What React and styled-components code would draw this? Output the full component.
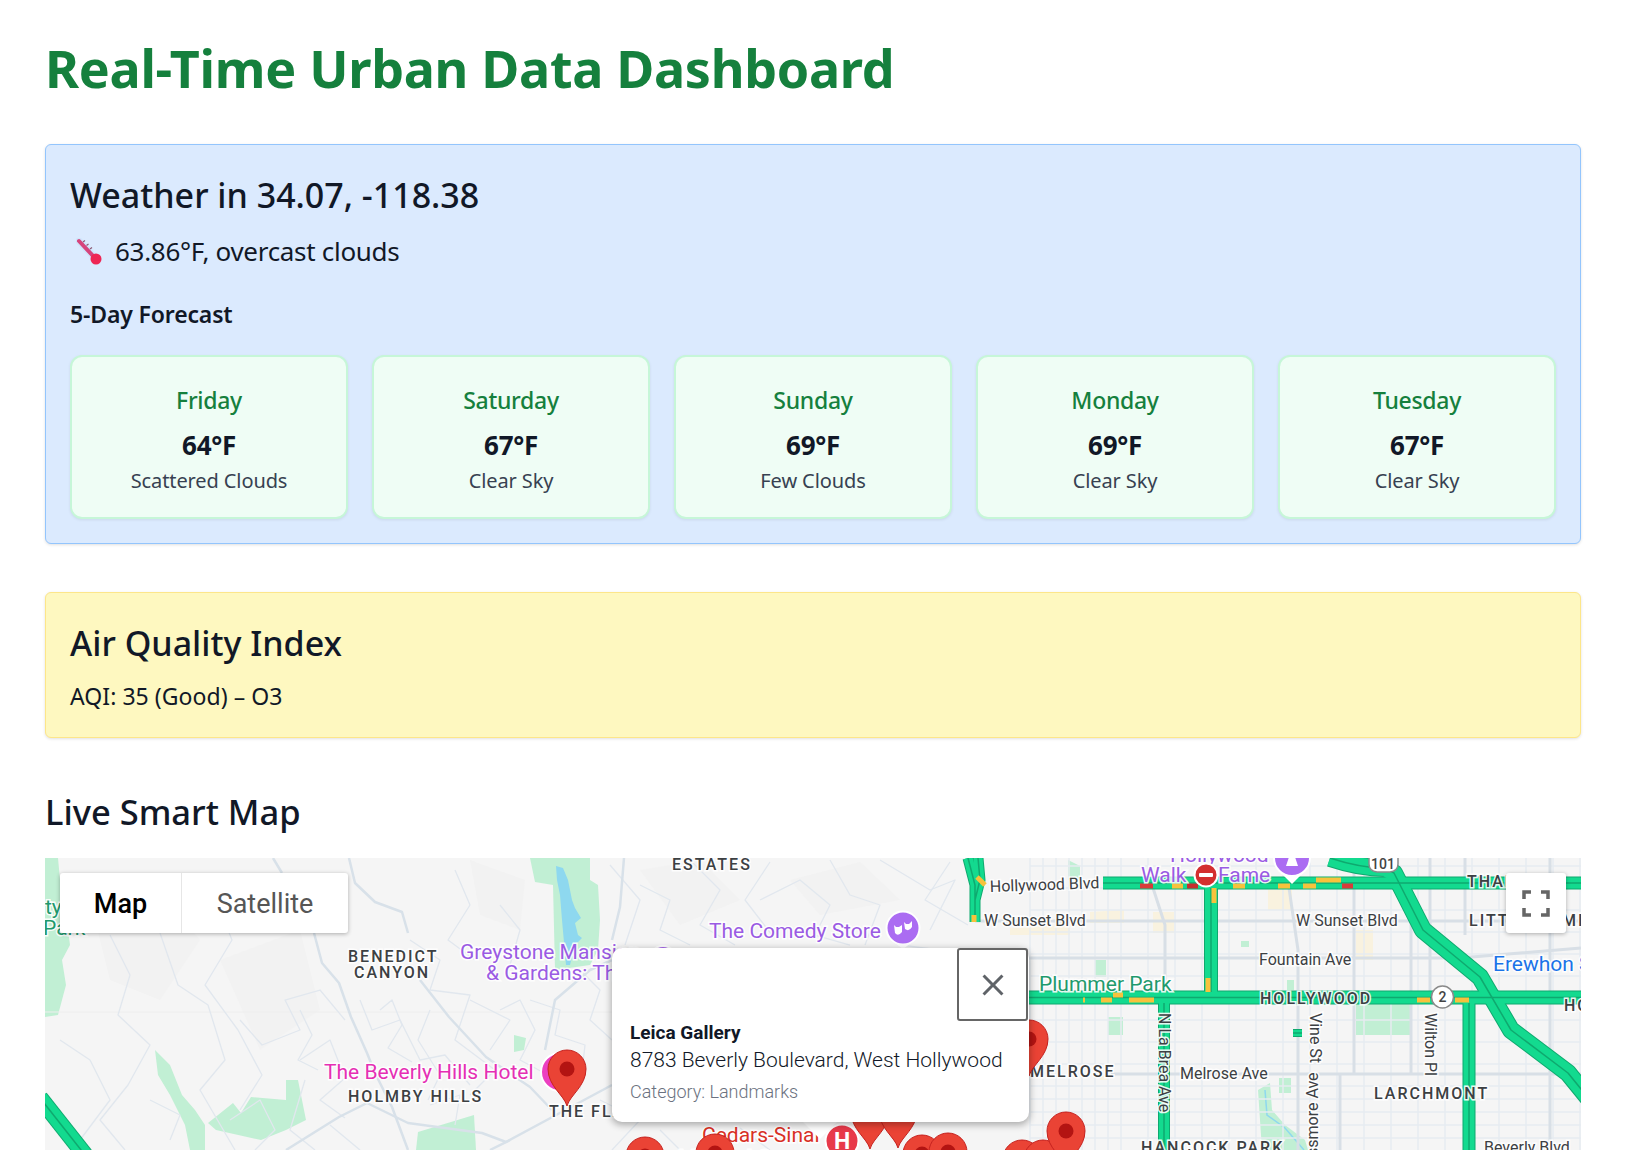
import styled, { createGlobalStyle } from 'styled-components';

const forecast = [
    { day: 'Friday', temp: '64°F', text: 'Scattered Clouds' },
    { day: 'Saturday', temp: '67°F', text: 'Clear Sky' },
    { day: 'Sunday', temp: '69°F', text: 'Few Clouds' },
    { day: 'Monday', temp: '69°F', text: 'Clear Sky' },
    { day: 'Tuesday', temp: '67°F', text: 'Clear Sky' },
];

// all map coordinates are page pixels, the svg viewBox starts at the map's corner
const parks = [
    '45,858 58,858 60,880 66,915 70,945 62,960 66,985 58,1015 45,1017',
    '530,858 590,858 590,880 598,885 600,920 598,950 590,965 555,970 553,885 535,882',
    '155,1050 170,1065 182,1095 195,1110 205,1125 205,1150 190,1150 185,1125 170,1095 158,1075',
    '251,1097 286,1100 286,1080 298,1080 306,1120 286,1130 261,1140 216,1130 208,1123 233,1103 241,1113',
    '416,1150 418,1132 474,1115 476,1150',
    '514,1035 526,1038 524,1050 514,1052',
    '1068,860 1080,866 1080,880 1068,880',
    '1095,960 1106,960 1106,977 1095,977',
    '1108,1017 1123,1017 1123,1035 1108,1035',
    '1356,1003 1411,1003 1411,1035 1356,1035',
    '1241,941 1249,941 1249,947 1241,947',
    '1287,980 1294,980 1294,990 1287,990',
    '1279,1078 1291,1078 1291,1093 1279,1093',
    '1258,1090 1270,1083 1272,1110 1285,1125 1305,1140 1308,1150 1262,1150',
];

const beige = [
    '1090,912 1124,910 1124,923 1090,923',
    '1153,912 1174,912 1174,933 1153,933',
    '1268,890 1292,890 1292,910 1268,910',
    '1356,930 1373,930 1373,960 1356,960',
    '1010,928 1070,925 1070,935 1010,935',
    '1100,1076 1108,1076 1108,1080 1100,1080',
];

const shades = [
    '90,900 150,880 200,940 160,1000 110,980',
    '220,960 300,930 320,1010 260,1050',
    '470,860 525,880 520,930 480,915',
    '640,870 700,860 740,900 680,925',
    '790,880 860,862 900,900 820,915',
];

const hillRoads = [
    'M273 858L282 873M349 858L355 883L375 902L402 912L408 933M314 933L322 963L339 983L351 1017L367 1053L375 1073L392 1107L408 1150',
    'M420 980L449 1017L486 1057L530 1087L552 1110M286 1150L339 1117L367 1103L408 1123L482 1133L506 1142L571 1107L612 1085',
    'M624 858L620 907L612 940M490 1150L510 1140M545 1050L555 1000L590 970L612 960',
];

const thinRoads = [
    'M110 935L130 975L118 1015L150 1045L128 1085L100 1120L125 1150',
    'M160 933L178 985L208 1005L225 1060L200 1090L235 1150',
    'M218 905L232 940L205 985L238 1030L262 1075L240 1110',
    'M240 1020L262 1045L300 1030L285 1000L320 990L345 1020',
    'M300 1060L330 1040L345 1078L320 1100L345 1118',
    'M410 940L440 960L430 990L470 995L455 1040L495 1070L470 1095',
    'M360 1000L372 1030L400 1020L420 1060L445 1055L470 1085',
    'M305 1080L290 1130L315 1150',
    'M150 1100L180 1115L170 1140M80 1140L110 1100L90 1060L60 1040',
    'M640 885L670 900L660 930L690 945M690 860L720 890L700 925L735 945',
    'M760 900L800 880L830 905L815 935L850 945M880 860L930 890L955 880L930 930',
    'M530 1000L560 1010L555 1035L585 1045L580 1090M470 1000L510 1020L490 1050',
    'M580 970L600 990L590 1020L612 1040M940 950L900 945',
    'M600 1100L640 1120L612 1150M660 1130L680 1150M740 1128L770 1150',
    'M300 1010L312 1035L298 1060L318 1070M380 1010L392 1000L402 1025L388 1048L412 1062',
    'M430 1010L418 1040L440 1075L428 1100M500 1010L520 1000L535 1030L520 1060L548 1075',
    'M455 870L470 905L448 940L475 960M500 905L520 930L510 965M610 865L640 900L625 945',
    'M770 862L745 900L772 935M830 860L850 895L880 905L865 945M950 862L925 900L968 925',
    'M230 1120L260 1100L275 1130L255 1150M430 1105L460 1095L455 1125M330 1125L360 1150',
];

const gridX = [];
for (let x = 1030; x < 1581; x += x < 1110 ? 13 : 27) gridX.push(x);
const gridY = [];
for (let y = 866; y < 1150; y += y > 1080 ? 13 : 22) gridY.push(y);

const mainStreets = [
    'M975 921H1581', 'M1029 958H1460L1581 948', 'M1111 1074H1581',
    'M1153 888L1165 925V992', 'M1289 888L1298 950V1150', 'M1354 858V1074', 'M1411 921V1074',
    'M1430 858V1003', 'M1465 858V935', 'M1340 1074V1150', 'M1550 858V1150',
];

const traffic = [
    { d: 'M968 858L975 885V922M978 858L980 880L975 900', w: 9 },
    { d: 'M1103 883H1581', w: 11 },
    { d: 'M1211 888V992', w: 12 },
    { d: 'M1029 997.5H1581', w: 12 },
    { d: 'M1164 1003V1150', w: 10 },
    { d: 'M1469 1003V1150', w: 11 },
    { d: 'M1330 858Q1360 868 1385 868L1394 873L1423 930L1480 977L1511 1030L1568 1073L1590 1100', w: 16 },
    { d: 'M40 1098L85 1155', w: 15 },
    { d: 'M1293 1033H1302', w: 6 },
];

const trafficMarks = [
    { d: 'M1140 886H1153', c: '#d93a3a' },
    { d: 'M1172 886H1183', c: '#f7c23c' },
    { d: 'M1187 886H1198', c: '#c62f2f' },
    { d: 'M1233 886H1245', c: '#f7c23c' },
    { d: 'M1278 886H1290', c: '#f7c23c' },
    { d: 'M1303 886H1316', c: '#f7c23c' },
    { d: 'M1316 880H1341', c: '#f7c23c' },
    { d: 'M1342 886H1353', c: '#d93a3a' },
    { d: 'M1214 888V903', c: '#f7c23c' },
    { d: 'M1208 978V992', c: '#f7c23c' },
    { d: 'M1083 1000H1085', c: '#f7c23c' },
    { d: 'M1101 1000H1112', c: '#f7c23c' },
    { d: 'M1113 995H1123', c: '#f7c23c' },
    { d: 'M1129 1000H1154', c: '#f7c23c' },
    { d: 'M1417 1000H1430', c: '#f7c23c' },
    { d: 'M1455 1000H1469', c: '#f7c23c' },
    { d: 'M977 877L985 885', c: '#f7c23c' },
    { d: 'M974 915V922', c: '#f7c23c' },
];

const labels = [
    { t: 'ESTATES', x: 672, y: 870, kind: 'area' },
    { t: 'BENEDICT', x: 348, y: 962, kind: 'area' },
    { t: 'CANYON', x: 354, y: 978, kind: 'area' },
    { t: 'HOLMBY HILLS', x: 348, y: 1102, kind: 'area' },
    { t: 'THE FLATS', x: 549, y: 1117, kind: 'area' },
    { t: 'MELROSE', x: 1030, y: 1077, kind: 'area' },
    { t: 'HOLLYWOOD', x: 1260, y: 1004, kind: 'area' },
    { t: 'HO', x: 1564, y: 1011, kind: 'area' },
    { t: 'LARCHMONT', x: 1374, y: 1099, kind: 'area' },
    { t: 'HANCOCK PARK', x: 1141, y: 1153, kind: 'area' },
    { t: 'THAI', x: 1467, y: 887, kind: 'area' },
    { t: 'LITTLE', x: 1469, y: 926, kind: 'area' },
    { t: 'MI', x: 1562, y: 926, kind: 'area' },
    { t: 'W Sunset Blvd', x: 984, y: 926, kind: 'street' },
    { t: 'W Sunset Blvd', x: 1296, y: 926, kind: 'street' },
    { t: 'Fountain Ave', x: 1259, y: 965, kind: 'street' },
    { t: 'Melrose Ave', x: 1180, y: 1079, kind: 'street' },
    { t: 'Beverly Blvd', x: 1484, y: 1153, kind: 'street' },
    { t: 'Hollywood Blvd', x: 990, y: 892, kind: 'street', rotate: -2 },
    { t: 'N La Brea Ave', x: 1159, y: 1013, kind: 'street', rotate: 90 },
    { t: 'Vine St', x: 1310, y: 1013, kind: 'street', rotate: 90 },
    { t: 'Wilton Pl', x: 1425, y: 1013, kind: 'street', rotate: 90 },
    { t: 'Rossmore Ave', x: 1318, y: 1175, kind: 'street', rotate: -90 },
    { t: 'ty', x: 45, y: 914, kind: 'park' },
    { t: 'Park', x: 43, y: 935, kind: 'park' },
    { t: 'Plummer Park', x: 1039, y: 991, kind: 'park' },
    { t: 'Greystone Mansion', x: 460, y: 959, kind: 'purple' },
    { t: '& Gardens: The', x: 486, y: 980, kind: 'purple' },
    { t: 'The Comedy Store', x: 709, y: 938, kind: 'purple' },
    { t: 'Hollywood', x: 1170, y: 862, kind: 'purple' },
    { t: 'Walk', x: 1141, y: 882, kind: 'purple' },
    { t: 'Fame', x: 1218, y: 882, kind: 'purple' },
    { t: 'The Beverly Hills Hotel', x: 324, y: 1079, kind: 'pink' },
    { t: 'Cedars-Sinai', x: 702, y: 1142, kind: 'red' },
    { t: 'Medical Center', x: 678, y: 1165, kind: 'red' },
    { t: 'Erewhon Santa', x: 1493, y: 971, kind: 'blue' },
];

// [x of the head's centre, y of the head's top]
const pins = [
    [567, 1050], [1029, 1020], [870, 1093], [898, 1092], [645, 1137], [715, 1134],
    [922, 1135], [948, 1133], [1022, 1140], [1043, 1140], [1066, 1112],
];

const Pin = ({ x, top }) => (
    <g transform={`translate(${x} ${top + 19})`}>
        <path
            d="M0,37 C-3,26 -19,17 -19,0 A19,19 0 1 1 19,0 C19,17 3,26 0,37Z"
            fill="#ea4335"
            stroke="#c5221f"
        />
        <circle r="7.5" fill="#b31412" />
    </g>
);

const MapLayer = () => (
    <MapCanvas viewBox="45 858 1536 292">
        <rect x="45" y="858" width="1536" height="292" fill="#f5f5f5" />
        {shades.map(p => <polygon key={p} points={p} fill="#f2f2f2" />)}
        {beige.map(p => <polygon key={p} points={p} fill="#f9f2df" />)}
        {parks.map(p => <polygon key={p} points={p} fill="#c1efd4" />)}
        <polygon
            points="556,866 563,868 568,880 572,900 575,908 581,918 575,923 578,935 582,938 575,945 570,965 566,965 562,920 560,895 557,880"
            fill="#8ed8ef"
        />
        <path d="M1265 1090L1267 1115L1285 1128L1304 1150" fill="none" stroke="#8ed8ef" strokeWidth="1.5" />
        <Street d="M45 1012H612" $width={1} $color="#eeeeee" />

        {gridX.map(x => <Street key={x} d={`M${x} 858V1150`} $width={1.5} $color="#e6ebf0" />)}
        {gridY.map(y => <Street key={y} d={`M1030 ${y}H1581`} $width={1.5} $color="#e6ebf0" />)}
        {thinRoads.map(d => <Street key={d} d={d} $width={1.3} $color="#e1e7ee" />)}
        {hillRoads.map(d => <Street key={d} d={d} $width={2.5} $color="#d8e1e9" />)}
        {mainStreets.map(d => <Street key={d} d={d} $width={3} $color="#d8dfe6" />)}

        {traffic.map(r => <Street key={r.d} d={r.d} $width={r.w + 2} $color="#0fa96f" />)}
        {traffic.map(r => <Street key={r.d} d={r.d} $width={r.w} $color="#13da8f" />)}
        {traffic.map(r => <Street key={r.d} d={r.d} $width={1.5} $color="#0fa96f" />)}
        {trafficMarks.map(m => <Street key={m.d} d={m.d} $width={5} $color={m.c} />)}

        {labels.map(l => (
            <MapLabel
                key={l.t + l.x}
                x={l.x}
                y={l.y}
                $kind={l.kind}
                transform={l.rotate ? `rotate(${l.rotate} ${l.x} ${l.y})` : undefined}
            >
                {l.t}
            </MapLabel>
        ))}

        <circle cx="560" cy="1072" r="19" fill="#ec3fc0" stroke="#fff" strokeWidth="2" />
        <circle cx="663" cy="960" r="14" fill="#a868ee" stroke="#fff" strokeWidth="2" />

        <path d="M891 940L903 949L915 940Z" fill="#fff" />
        <circle cx="903" cy="928" r="16.5" fill="#ab6cf2" stroke="#fff" strokeWidth="2" />
        <path d="M894 925L896 927H899L902 925V932Q898 937 895 933ZM904 922L906 924H909L912 921V927Q909 932 905 929Z" fill="#fff" />

        <path d="M1280 872L1292 884L1304 872Z" fill="#fff" />
        <circle cx="1292" cy="858" r="18" fill="#ab6cf2" stroke="#fff" strokeWidth="2" />
        <path d="M1289 857H1295L1298 866H1286Z" fill="#fff" />

        <circle cx="1206" cy="875" r="11.5" fill="#d32f2f" stroke="#fff" strokeWidth="2" />
        <rect x="1199" y="873" width="14" height="4" rx="1" fill="#fff" />

        <circle cx="1442.5" cy="997" r="11" fill="#fff" stroke="#8a8a8a" strokeWidth="1.5" />
        <ShieldText x="1442.5" y="1002">2</ShieldText>
        <path d="M1369 855H1398V864Q1398 871 1390 872H1377Q1369 871 1369 864Z" fill="#fff" stroke="#8a8a8a" strokeWidth="1.5" />
        <ShieldText x="1383" y="869">101</ShieldText>

        {pins.map(([x, top]) => <Pin key={x} x={x} top={top} />)}

        <path d="M803 1122L820 1139L837 1122Z" fill="#fff" />
        <circle cx="842" cy="1141" r="16.5" fill="#e8394a" stroke="#fff" strokeWidth="2" />
        <HospitalText x="842" y="1149">H</HospitalText>
    </MapCanvas>
);

const Thermometer = () => (
    <ThermoIcon viewBox="0 0 27 27">
        <path d="M3 3L19 20" stroke="#cfe4fb" strokeWidth="7" strokeLinecap="round" />
        <path d="M3 3L19 20" stroke="#d6447c" strokeWidth="4" strokeLinecap="round" />
        <circle cx="20" cy="21" r="5.5" fill="#ee2654" />
        <path d="M7 4L9 2.5M10.5 7.5L12.5 6M14 11L16 9.5" stroke="#8d5a74" strokeWidth="1.2" />
    </ThermoIcon>
);

const App = () => {
    return (
        <Page>
            <GlobalStyle />
            <Title>Real-Time Urban Data Dashboard</Title>

            <WeatherPanel>
                <PanelHeading>Weather in 34.07, -118.38</PanelHeading>
                <TempRow>
                    <Thermometer />
                    63.86°F, overcast clouds
                </TempRow>
                <ForecastTitle>5-Day Forecast</ForecastTitle>
                <ForecastGrid>
                    {forecast.map(f => (
                        <DayCard key={f.day}>
                            <DayName>{f.day}</DayName>
                            <DayTemp>{f.temp}</DayTemp>
                            <DayText>{f.text}</DayText>
                        </DayCard>
                    ))}
                </ForecastGrid>
            </WeatherPanel>

            <AirPanel>
                <PanelHeading>Air Quality Index</PanelHeading>
                <AirText>AQI: 35 (Good) – O3</AirText>
            </AirPanel>

            <MapHeading>Live Smart Map</MapHeading>
            <MapFrame>
                <MapLayer />
                <MapTypes>
                    <MapType $active>Map</MapType>
                    <MapType>Satellite</MapType>
                </MapTypes>
                <FullscreenButton aria-label="Fullscreen">
                    <svg width="28" height="27" viewBox="0 0 28 27" fill="none" stroke="#666" strokeWidth="3.5">
                        <path d="M2 9V2H9M19 2H26V9M26 18V25H19M9 25H2V18" />
                    </svg>
                </FullscreenButton>
                <Popup>
                    <CloseRow>
                        <CloseButton aria-label="Close">
                            <svg width="36" height="36" viewBox="0 0 24 24" fill="#5f6368">
                                <path d="M19 6.41L17.59 5 12 10.59 6.41 5 5 6.41 10.59 12 5 17.59 6.41 19 12 13.41 17.59 19 19 17.59 13.41 12z" />
                            </svg>
                        </CloseButton>
                    </CloseRow>
                    <PlaceName>Leica Gallery</PlaceName>
                    <PlaceAddress>8783 Beverly Boulevard, West Hollywood</PlaceAddress>
                    <PlaceCategory>Category: Landmarks</PlaceCategory>
                </Popup>
            </MapFrame>
        </Page>
    );
};

const labelColors = {
    area: '#3c4043',
    street: '#3c4043',
    park: '#1f9a6d',
    purple: '#9a5be3',
    pink: '#e52fb4',
    red: '#d93025',
    blue: '#1a73e8',
};

const GlobalStyle = createGlobalStyle`
    html, body {
        margin: 0;
        background: #fff;
        font-family: "Noto Sans", "Open Sans", sans-serif;
        color: #111827;
    }
`;

const Page = styled.div`
    height: 1150px;
    overflow: hidden;
    padding: 36px 59px 0 45px;
    box-sizing: border-box;
`;

const Title = styled.h1`
    margin: 0 0 44px;
    font-size: 52px;
    line-height: 64px;
    font-weight: 700;
    color: #15803d;
    letter-spacing: -0.3px;
`;

const WeatherPanel = styled.section`
    background: #dbeafe;
    border: 1px solid #93c5fd;
    border-radius: 6px;
    padding: 26px 24px 24px;
    box-shadow: 0 1px 3px rgba(0, 0, 0, 0.12);
    margin-bottom: 48px;
`;

const PanelHeading = styled.h2`
    margin: 0;
    font-size: 34px;
    line-height: 48px;
    font-weight: 500;
`;

const TempRow = styled.div`
    display: flex;
    align-items: center;
    gap: 12px;
    margin-top: 14px;
    padding-left: 6px;
    font-size: 26px;
    line-height: 36px;
    letter-spacing: -0.3px;
`;

const ThermoIcon = styled.svg`
    width: 27px;
    height: 27px;
`;

const ForecastTitle = styled.h3`
    margin: 30px 0 0;
    font-size: 23px;
    line-height: 30px;
    font-weight: 600;
    letter-spacing: -0.15px;
`;

const ForecastGrid = styled.div`
    display: grid;
    grid-template-columns: repeat(5, 1fr);
    gap: 24px;
    margin-top: 26px;
`;

const DayCard = styled.div`
    background: #effdf5;
    border: 2px solid #c6f6d8;
    border-radius: 12px;
    height: 164px;
    box-sizing: border-box;
    padding-top: 27px;
    text-align: center;
    box-shadow: 0 1px 3px rgba(0, 0, 0, 0.08);
`;

const DayName = styled.div`
    font-size: 23px;
    line-height: 32px;
    font-weight: 500;
    color: #15803d;
    letter-spacing: -0.3px;
`;

const DayTemp = styled.div`
    margin-top: 12px;
    font-size: 26px;
    line-height: 34px;
    font-weight: 700;
    letter-spacing: -0.3px;
`;

const DayText = styled.div`
    margin-top: 4px;
    font-size: 20px;
    line-height: 30px;
    color: #374151;
    letter-spacing: -0.1px;
`;

const AirPanel = styled.section`
    background: #fef8c0;
    border: 1px solid #fde68a;
    border-radius: 6px;
    padding: 26px 24px 25px;
    box-shadow: 0 1px 3px rgba(0, 0, 0, 0.12);
    margin-bottom: 50px;
`;

const AirText = styled.p`
    margin: 13px 0 0;
    font-size: 23px;
    line-height: 32px;
    letter-spacing: 0.05px;
`;

const MapHeading = styled.h2`
    margin: 0 0 22px;
    font-size: 34.5px;
    line-height: 48px;
    font-weight: 500;
`;

const MapFrame = styled.div`
    position: relative;
    height: 292px;
    overflow: hidden;
    font-family: Roboto, sans-serif;
`;

const MapCanvas = styled.svg`
    display: block;
    width: 100%;
    height: 100%;
`;

const Street = styled.path`
    fill: none;
    stroke: ${props => props.$color};
    stroke-width: ${props => props.$width};
    stroke-linejoin: round;
`;

const MapLabel = styled.text`
    font-family: Roboto, sans-serif;
    font-size: ${props => (props.$kind === 'area' ? '16px' : props.$kind === 'street' ? '16px' : '21px')};
    font-weight: ${props => (props.$kind === 'area' ? 500 : 400)};
    letter-spacing: ${props => (props.$kind === 'area' ? '2px' : '0')};
    fill: ${props => labelColors[props.$kind]};
    stroke: rgba(255, 255, 255, 0.9);
    stroke-width: 3px;
    paint-order: stroke;
`;

const ShieldText = styled.text`
    font-family: Roboto, sans-serif;
    font-size: 14px;
    font-weight: 500;
    text-anchor: middle;
    fill: #444;
`;

const HospitalText = styled.text`
    font-family: Roboto, sans-serif;
    font-size: 23px;
    font-weight: 700;
    text-anchor: middle;
    fill: #fff;
`;

const MapTypes = styled.div`
    position: absolute;
    top: 15px;
    left: 15px;
    display: flex;
    height: 60px;
    background: #fff;
    border-radius: 3px;
    box-shadow: 0 1px 4px rgba(0, 0, 0, 0.3);
`;

const MapType = styled.div`
    display: flex;
    align-items: center;
    justify-content: center;
    box-sizing: border-box;
    width: ${props => (props.$active ? '122px' : '166px')};
    padding-top: 2px;
    font-size: 27px;
    font-weight: ${props => (props.$active ? 500 : 400)};
    color: ${props => (props.$active ? '#000' : '#565656')};
    border-right: ${props => (props.$active ? '1px solid #e6e6e6' : 'none')};
`;

const FullscreenButton = styled.div`
    position: absolute;
    top: 15px;
    right: 15px;
    width: 60px;
    height: 60px;
    display: flex;
    align-items: center;
    justify-content: center;
    background: #fff;
    border-radius: 3px;
    box-shadow: 0 1px 4px rgba(0, 0, 0, 0.3);
`;

const Popup = styled.div`
    position: absolute;
    left: 567px;
    top: 90px;
    width: 417px;
    height: 174px;
    box-sizing: border-box;
    padding: 0 1px 0 18px;
    background: #fff;
    border-radius: 10px;
    box-shadow: 0 2px 7px 1px rgba(0, 0, 0, 0.3);
`;

const CloseRow = styled.div`
    display: flex;
    justify-content: flex-end;
    height: 72px;
`;

const CloseButton = styled.div`
    width: 71px;
    height: 73px;
    box-sizing: border-box;
    display: flex;
    align-items: center;
    justify-content: center;
    border: 2px solid #666;
    border-radius: 3px;
`;

const PlaceName = styled.div`
    font-size: 19px;
    line-height: 26px;
    font-weight: 700;
    color: #111827;
`;

const PlaceAddress = styled.div`
    font-size: 21px;
    line-height: 29px;
    font-weight: 300;
    color: #111827;
    white-space: nowrap;
`;

const PlaceCategory = styled.div`
    margin-top: 4px;
    font-size: 18px;
    line-height: 26px;
    font-weight: 300;
    color: #6b7280;
`;

export default App;
